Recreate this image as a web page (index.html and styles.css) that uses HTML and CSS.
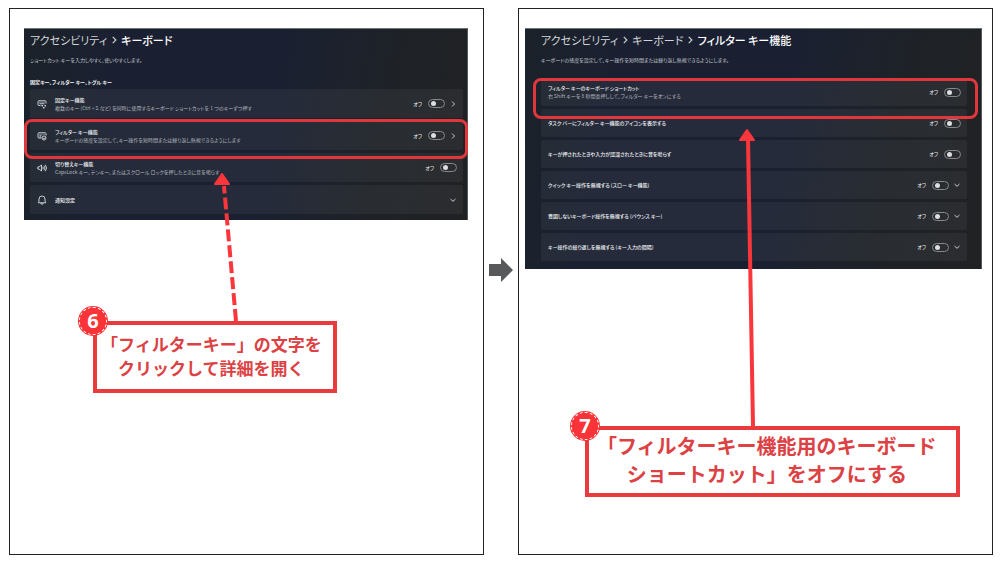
FILE: index.html
```html
<!DOCTYPE html>
<html lang="ja">
<head>
    <meta charset="UTF-8">
    <meta name="viewport" content="width=device-width, initial-scale=1.0">
    <title>フィルターキー機能をオフにする手順</title>
    <link rel="stylesheet" href="styles.css">
</head>
<body>
    <!-- shared icons -->
    <svg class="sprite" aria-hidden="true">
        <symbol id="chevron-right" viewBox="0 0 8 8"><path d="M3 1.5 5.5 4 3 6.5"/></symbol>
        <symbol id="chevron-down" viewBox="0 0 8 8"><path d="M1.5 3 4 5.3 6.5 3"/></symbol>
    </svg>

    <main class="steps">
        <section class="panel panel-left">
            <div class="screen">
                <nav class="breadcrumb">
                    <a href="#">アクセシビリティ</a>
                    <svg class="separator"><use href="#chevron-right"/></svg>
                    <strong>キーボード</strong>
                </nav>
                <p class="lead">ショートカット キーを入力しやすく、使いやすくします。</p>
                <h2>固定キー、フィルター キー、トグル キー</h2>

                <div class="rows">
                    <div class="row">
                        <svg class="icon" viewBox="0 0 20 20">
                            <path d="M7 13H3.5A1.5 1.5 0 0 1 2 11.5V5A1.5 1.5 0 0 1 3.5 3.5h13A1.5 1.5 0 0 1 18 5v4M5 6.5h2m2 0h2m2 0h2M5 9.5h10"/>
                            <path class="solid" d="M9 12h3v3H9zM15 12h3v3h-3zM12 16h3v3h-3z"/>
                        </svg>
                        <div class="text">
                            <h3>固定キー機能</h3>
                            <p>複数のキー (Ctrl + S など) を同時に使用するキーボード ショートカットを 1 つのキーずつ押す</p>
                        </div>
                        <label for="sticky">オフ</label>
                        <input type="checkbox" role="switch" id="sticky">
                        <button type="button" aria-label="固定キー機能を開く"><svg><use href="#chevron-right"/></svg></button>
                    </div>
                    <div class="row">
                        <svg class="icon" viewBox="0 0 20 20">
                            <path d="M9 14H3.5A1.5 1.5 0 0 1 2 12.5V5A1.5 1.5 0 0 1 3.5 3.5h13A1.5 1.5 0 0 1 18 5v4M5 6.5h2m2 0h2m2 0h2M5 9.5h4M5 12h3"/>
                            <circle cx="14" cy="14" r="4"/>
                            <path d="M12 14l2 1.5 3-3"/>
                        </svg>
                        <div class="text">
                            <h3>フィルター キー機能</h3>
                            <p>キーボードの感度を設定して、キー操作を短時間または繰り返し無視できるようにします</p>
                        </div>
                        <label for="filter">オフ</label>
                        <input type="checkbox" role="switch" id="filter">
                        <button type="button" aria-label="フィルター キー機能を開く"><svg><use href="#chevron-right"/></svg></button>
                    </div>
                    <div class="row">
                        <svg class="icon" viewBox="0 0 20 20">
                            <path d="M1.5 8v4H4l5 4V4L4 8zM11.5 7.5a4 4 0 0 1 0 5M14 5.5a7 7 0 0 1 0 9M16.5 3.5a10 10 0 0 1 0 13"/>
                        </svg>
                        <div class="text">
                            <h3>切り替えキー機能</h3>
                            <p>CapsLock キー、テンキー、またはスクロール ロックを押したときに音を鳴らす</p>
                        </div>
                        <label for="toggle">オフ</label>
                        <input type="checkbox" role="switch" id="toggle">
                    </div>
                    <div class="row">
                        <svg class="icon" viewBox="0 0 20 20">
                            <path d="M10 2a6 6 0 0 0-6 6v4l-1.5 3.5h15L16 12V8a6 6 0 0 0-6-6zM7.5 16a2.5 2.5 0 0 0 5 0"/>
                        </svg>
                        <div class="text">
                            <h3>通知設定</h3>
                        </div>
                        <button type="button" aria-label="通知設定を展開"><svg><use href="#chevron-down"/></svg></button>
                    </div>
                </div>
                <div class="highlight"></div>
            </div>

            <svg class="pointer" width="40" height="150" viewBox="0 0 40 150">
                <path class="dashed" d="M25 149 13 14"/>
                <path class="head" d="M11 2 18 12H4z"/>
            </svg>

            <div class="callout">
                <span class="badge">6</span>
                <p>「フィルターキー」の文字を<br>クリックして詳細を開く</p>
            </div>
        </section>

        <svg class="next" viewBox="0 0 24 24">
            <path d="M0 6h12V0l12 12-12 12v-6H0z"/>
        </svg>

        <section class="panel panel-right">
            <div class="screen">
                <nav class="breadcrumb">
                    <a href="#">アクセシビリティ</a>
                    <svg class="separator"><use href="#chevron-right"/></svg>
                    <a href="#">キーボード</a>
                    <svg class="separator"><use href="#chevron-right"/></svg>
                    <strong>フィルター キー機能</strong>
                </nav>
                <p class="lead">キーボードの感度を設定して、キー操作を短時間または繰り返し無視できるようにします。</p>

                <div class="rows">
                    <div class="row">
                        <div class="text">
                            <h3>フィルター キーのキーボード ショートカット</h3>
                            <p>右 Shift キーを 8 秒間長押しして、フィルター キーをオンにする</p>
                        </div>
                        <label for="shortcut">オフ</label>
                        <input type="checkbox" role="switch" id="shortcut">
                    </div>
                    <div class="row">
                        <div class="text">
                            <h3>タスク バーにフィルター キー機能のアイコンを表示する</h3>
                        </div>
                        <label for="taskbar">オフ</label>
                        <input type="checkbox" role="switch" id="taskbar">
                    </div>
                    <div class="row">
                        <div class="text">
                            <h3>キーが押されたときや入力が認識されたときに音を鳴らす</h3>
                        </div>
                        <label for="sound">オフ</label>
                        <input type="checkbox" role="switch" id="sound">
                    </div>
                    <div class="row">
                        <div class="text">
                            <h3>クイック キー操作を無視する (スロー キー機能)</h3>
                        </div>
                        <label for="slow">オフ</label>
                        <input type="checkbox" role="switch" id="slow">
                        <button type="button" aria-label="スロー キー機能を展開"><svg><use href="#chevron-down"/></svg></button>
                    </div>
                    <div class="row">
                        <div class="text">
                            <h3>意図しないキーボード操作を無視する (バウンス キー)</h3>
                        </div>
                        <label for="bounce">オフ</label>
                        <input type="checkbox" role="switch" id="bounce">
                        <button type="button" aria-label="バウンス キーを展開"><svg><use href="#chevron-down"/></svg></button>
                    </div>
                    <div class="row">
                        <div class="text">
                            <h3>キー操作の繰り返しを無視する (キー入力の間隔)</h3>
                        </div>
                        <label for="repeat">オフ</label>
                        <input type="checkbox" role="switch" id="repeat">
                        <button type="button" aria-label="キー入力の間隔を展開"><svg><use href="#chevron-down"/></svg></button>
                    </div>
                </div>
                <div class="highlight"></div>
            </div>

            <svg class="pointer" width="30" height="300" viewBox="0 0 30 300">
                <path d="M16 299 11 12"/>
                <path class="head" d="M10 3 17 13H3z"/>
            </svg>

            <div class="callout">
                <span class="badge">7</span>
                <p>「フィルターキー機能用のキーボード<br>ショートカット」をオフにする</p>
            </div>
        </section>
    </main>
</body>
</html>
```
FILE: styles.css
```css
* {
    margin: 0;
    padding: 0;
    box-sizing: border-box;
}

body {
    background: #fff;
    font-family: "Noto Sans CJK JP", sans-serif;
    padding: 8px 7px 8px 9px;
}

.sprite {
    display: none;
}

.steps {
    display: grid;
    grid-template-columns: 1fr 34px 1fr;
    min-height: calc(100vh - 16px);
}

.panel {
    position: relative;
    border: 1px solid #222;
    min-width: 0;
}

.panel-left {
    padding: 19px 15px 19px 14px;
}

.panel-right {
    padding: 19px 10px 19px 6px;
}

/* settings window */
.screen {
    position: relative;
    color: #f0f1f3;
    font-feature-settings: "palt";
    background: linear-gradient(100deg, #1b2229 0%, #1a2031 20%, #1a2031 55%, #1e2227 80%, #202123 100%);
    border-top: 1px solid #6f7371;
    border-right: 1px solid #55585a;
}

.panel-left .screen {
    padding: 3px 4px 6px 6px;
}

.panel-right .screen {
    padding: 3px 14px 8px 16px;
}

.breadcrumb {
    display: flex;
    align-items: center;
    gap: 2px;
    height: 16px;
    font-size: 11px;
    line-height: 16px;
    white-space: nowrap;
}

.breadcrumb a {
    color: #d3d5d9;
    text-decoration: none;
}

.breadcrumb strong {
    color: #fff;
    font-weight: 500;
}

.separator {
    width: 10px;
    height: 10px;
}

svg {
    fill: none;
    stroke: #c9cbd0;
    stroke-width: 1;
}

.lead {
    margin-top: 8px;
    color: #c3c6cc;
    font-size: 5px;
    line-height: 8px;
}

h2 {
    margin-top: 14px;
    font-size: 5px;
    font-weight: 700;
    line-height: 8px;
}

.rows {
    display: flex;
    flex-direction: column;
    gap: 3px;
}

.panel-left .rows {
    margin-top: 3px;
}

.panel-right .rows {
    margin-top: 14px;
}

.row {
    display: flex;
    align-items: center;
    height: 29px;
    padding: 0 6px 0 7px;
    background: rgba(255, 255, 255, 0.05);
    border-radius: 2px;
}

.panel-right .row {
    height: 28px;
}

.icon {
    width: 10px;
    height: 10px;
    margin-right: 8px;
    stroke-width: 2;
    flex-shrink: 0;
}

.icon .solid {
    fill: #c9cbd0;
    stroke: none;
}

.text {
    flex: 1;
    min-width: 0;
    line-height: 8px;
    white-space: nowrap;
}

.text h3 {
    font-size: 5px;
    font-weight: 500;
}

.text p {
    color: #b5b8bf;
    font-size: 5px;
}

.row label {
    font-size: 5px;
    line-height: 8px;
    margin-right: 6px;
}

.row input {
    appearance: none;
    display: flex;
    align-items: center;
    width: 17px;
    height: 9px;
    padding-left: 2px;
    border: 1px solid #85888d;
    border-radius: 5px;
}

.row input::before {
    content: "";
    width: 5px;
    height: 5px;
    border-radius: 50%;
    background: #dddee0;
}

.row button {
    display: flex;
    margin-left: 4px;
    border: 0;
    background: none;
}

.row button svg {
    width: 8px;
    height: 8px;
}

.highlight {
    position: absolute;
    border: 3px solid #e0363c;
    border-radius: 8px;
}

.panel-left .highlight {
    top: 90px;
    left: 0;
    right: -1px;
    height: 40px;
}

.panel-right .highlight {
    top: 49px;
    left: 8px;
    right: 3px;
    height: 41px;
}

/* red explanations */
.pointer {
    position: absolute;
    stroke: #f8363b;
    stroke-width: 4;
}

.panel-left .pointer {
    top: 163px;
    left: 201px;
}

.panel-right .pointer {
    top: 118px;
    left: 218px;
}

.pointer .dashed {
    stroke-dasharray: 12 4;
}

.pointer .head {
    fill: #f8363b;
    stroke-width: 2;
    stroke-linejoin: round;
}

.callout {
    position: relative;
    width: fit-content;
    border: 4px solid #e93a3d;
    color: #dc4144;
    font-weight: 700;
    text-align: center;
    white-space: nowrap;
}

.panel-left .callout {
    margin: 101px 0 0 69px;
    padding: 7px 11px 9px 4px;
    font-size: 17px;
    line-height: 24px;
}

.panel-right .callout {
    margin: 157px 0 0 60px;
    padding: 2px 19px 5px 8px;
    font-size: 20px;
    line-height: 28px;
}

.badge {
    position: absolute;
    top: -19px;
    left: -19px;
    width: 30px;
    height: 30px;
    border-radius: 50%;
    background: #fa3338;
    color: #fff;
    font: 700 20px/30px "Open Sans", sans-serif;
}

.badge::after {
    content: "";
    position: absolute;
    inset: 1px;
    border: 1px dashed #fff;
    border-radius: 50%;
}

.next {
    align-self: center;
    justify-self: center;
    width: 24px;
    height: 24px;
    margin-bottom: 24px;
    fill: #58595b;
    stroke: none;
}
```
